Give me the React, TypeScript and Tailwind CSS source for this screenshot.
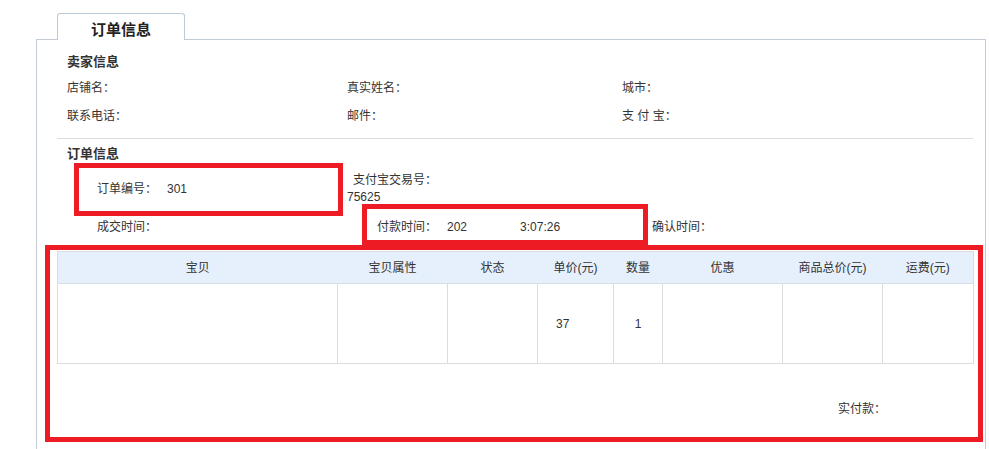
import React from 'react';

const FONT = "font-['Liberation_Sans','Noto_Sans_CJK_SC',sans-serif]";

// column widths of the goods table, left to right
const COLUMNS: { title: string; width: string }[] = [
  { title: '宝贝', width: 'w-[280px]' },
  { title: '宝贝属性', width: 'w-[110px]' },
  { title: '状态', width: 'w-[90px]' },
  { title: '单价(元)', width: 'w-[76px]' },
  { title: '数量', width: 'w-[49px]' },
  { title: '优惠', width: 'w-[120px]' },
  { title: '商品总价(元)', width: 'w-[100px]' },
  { title: '运费(元)', width: 'w-[91px]' },
];

function SectionTitle({ children }: { children: React.ReactNode }) {
  return <div className="pl-[10px] text-[13px] font-bold leading-[20px] text-[#333]">{children}</div>;
}

export default function App() {
  return (
    <div className={`relative h-[449px] w-[989px] overflow-hidden bg-white text-[12px] text-[#333] ${FONT}`}>
      <div className="pl-[36px] pt-[13px]">
        {/* tab */}
        <div className="relative z-10 -mb-px ml-[21px] flex h-[27px] w-[128px] items-center justify-center rounded-t-[3px] border border-b-0 border-[#bccbd8] bg-white pt-[6px] text-[15px] font-bold text-[#222]">
          订单信息
        </div>

        {/* panel */}
        <div className="w-[950px] border border-[#c3ccd5] pb-[40px] pl-[20px] pr-[12px] pt-[12px]">
          <SectionTitle>卖家信息</SectionTitle>
          <div className="mt-[2px] grid grid-cols-[280px_275px_1fr] pl-[10px] leading-[28px]">
            <div>店铺名：</div>
            <div>真实姓名：</div>
            <div>城市：</div>
            <div>联系电话：</div>
            <div>邮件：</div>
            <div>支 付 宝：</div>
          </div>

          <div className="mt-[8px] border-t border-[#dddddd]" />

          <div className="mt-[5px]">
            <SectionTitle>订单信息</SectionTitle>
          </div>
          <div className="grid grid-cols-[280px_275px_1fr] pl-[10px]">
            <div className="flex h-[50px] items-center pl-[30px]">
              <span>订单编号：</span>
              <span className="ml-[10px]">301</span>
            </div>
            <div className="flex h-[50px] flex-col justify-center leading-[17px]">
              <span className="pl-[6px]">支付宝交易号：</span>
              <span>75625</span>
            </div>
            <div />
            <div className="flex h-[26px] items-center pl-[30px]">成交时间：</div>
            <div className="flex h-[26px] items-center pl-[30px]">
              <span>付款时间：</span>
              <span className="ml-[10px]">202</span>
              <span className="ml-[53px]">3:07:26</span>
            </div>
            <div className="flex h-[26px] items-center pl-[30px]">确认时间：</div>
          </div>

          {/* goods table */}
          <table className="mt-[11px] w-[916px] table-fixed border-collapse border border-[#dcdcdc]">
            <thead>
              <tr className="h-[32px] bg-[#e6f0fc]">
                {COLUMNS.map((c) => (
                  <th key={c.title} className={`${c.width} border-b border-[#d6dee8] text-center font-normal text-[#333]`}>
                    {c.title}
                  </th>
                ))}
              </tr>
            </thead>
            <tbody>
              <tr className="h-[80px]">
                <td className="border border-[#dcdcdc]" />
                <td className="border border-[#dcdcdc]" />
                <td className="border border-[#dcdcdc]" />
                <td className="border border-[#dcdcdc] pl-[18px]">37</td>
                <td className="border border-[#dcdcdc] text-center">1</td>
                <td className="border border-[#dcdcdc]" />
                <td className="border border-[#dcdcdc]" />
                <td className="border border-[#dcdcdc]" />
              </tr>
            </tbody>
          </table>

          <div className="mt-[35px] flex h-[20px] items-center pl-[781px] leading-[20px]">实付款：</div>
        </div>
      </div>

      {/* red highlight frames drawn over the form */}
      <div className="pointer-events-none absolute left-[74px] top-[163px] h-[53px] w-[269px] border-[5px] border-[#ed1c24]" />
      <div className="pointer-events-none absolute left-[362px] top-[204px] h-[41px] w-[286px] border-[5px] border-[#ed1c24]" />
      <div className="pointer-events-none absolute left-[45px] top-[245px] h-[197px] w-[938px] border-[5px] border-[#ed1c24]" />
    </div>
  );
}
